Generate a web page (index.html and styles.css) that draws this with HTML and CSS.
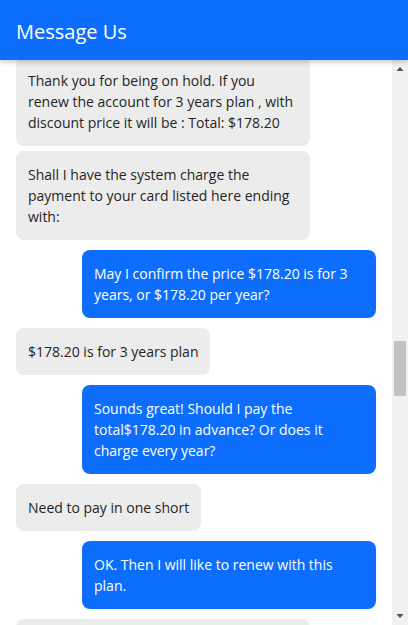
FILE: index.html
```html
<!DOCTYPE html>
<html lang="en">
<head>
<meta charset="utf-8">
<title>Message Us</title>
<link rel="stylesheet" href="styles.css">
</head>
<body>
<div class="chat">
  <header class="chat-header">
    <h1 class="chat-title">Message Us</h1>
  </header>
  <div class="chat-body">
    <div class="messages">
      <div class="msg received">Thank you for being on hold. If you renew the account for 3 years plan , with discount price it will be : Total: $178.20</div>
      <div class="msg received follow">Shall I have the system charge the payment to your card listed here ending with:</div>
      <div class="msg sent">May I confirm the price $178.20 is for 3 years, or $178.20 per year?</div>
      <div class="msg received">$178.20 is for 3 years plan</div>
      <div class="msg sent">Sounds great! Should I pay the total$178.20 in advance? Or does it charge every year?</div>
      <div class="msg received">Need to pay in one short</div>
      <div class="msg sent">OK. Then I will like to renew with this plan.</div>
      <div class="msg received peek"></div>
    </div>
    <div class="scrollbar" aria-hidden="true">
      <div class="sb-btn">
        <svg width="16" height="17" viewBox="0 0 16 17"><polygon points="4.5,11 11.5,11 8,7" fill="#505050"/></svg>
      </div>
      <div class="sb-track">
        <div class="sb-thumb"></div>
      </div>
      <div class="sb-btn">
        <svg width="16" height="17" viewBox="0 0 16 17"><polygon points="4.5,6 11.5,6 8,10" fill="#505050"/></svg>
      </div>
    </div>
  </div>
</div>
</body>
</html>
```
FILE: styles.css
```css
html, body {
  margin: 0;
  padding: 0;
  background: #ffffff;
}

.chat {
  width: 408px;
  height: 625px;
  display: flex;
  flex-direction: column;
  overflow: hidden;
  font-family: "Open Sans", "Noto Sans", sans-serif;
}

.chat-header {
  position: relative;
  z-index: 2;
  height: 60px;
  flex: 0 0 60px;
  box-sizing: border-box;
  background: #0d6efd;
  display: flex;
  align-items: center;
  padding: 4px 16px 0;
  box-shadow: 0 2px 5px rgba(0, 0, 0, 0.22);
}

.chat-title {
  margin: 0;
  font-size: 20px;
  font-weight: 400;
  color: #ffffff;
  line-height: 28px;
}

.chat-body {
  flex: 1;
  min-height: 0;
  display: flex;
  overflow: hidden;
}

.messages {
  flex: 1;
  min-width: 0;
  display: flex;
  flex-direction: column;
  padding: 0 16px;
  margin-top: -3px;
}

.msg {
  max-width: 294px;
  box-sizing: border-box;
  padding: 13px 12px;
  border-radius: 8px;
  font-size: 14px;
  line-height: 21px;
  margin-top: 10px;
  flex-shrink: 0;
}

.msg:first-child {
  margin-top: 0;
}

.msg.follow {
  margin-top: 5px;
}

.received {
  align-self: flex-start;
  background: #ececec;
  color: #252525;
}

.sent {
  align-self: flex-end;
  width: 294px;
  background: #0d6efd;
  color: #ffffff;
}

.peek {
  width: 294px;
  height: 47px;
}

.scrollbar {
  flex: 0 0 16px;
  width: 16px;
  background: #f1f1f1;
  display: flex;
  flex-direction: column;
}

.sb-btn {
  height: 17px;
  flex: 0 0 17px;
}

.sb-btn svg {
  display: block;
}

.sb-track {
  flex: 1;
  padding: 0 2px;
}

.sb-thumb {
  margin-top: 264px;
  height: 55px;
  background: #c1c1c1;
}
```
